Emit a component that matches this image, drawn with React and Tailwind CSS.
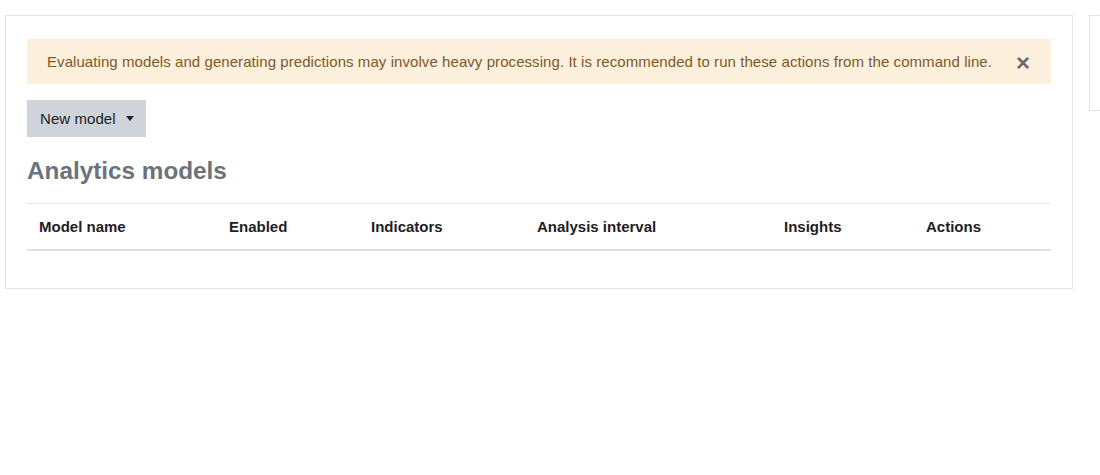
import React from 'react';

const columns = [
  { label: 'Model name', width: 'w-[190px]' },
  { label: 'Enabled', width: 'w-[142px]' },
  { label: 'Indicators', width: 'w-[166px]' },
  { label: 'Analysis interval', width: 'w-[247px]' },
  { label: 'Insights', width: 'w-[142px]' },
  { label: 'Actions', width: '' },
];

const App = () => {
  return (
    <div
      className="w-[1100px] h-[475px] overflow-hidden bg-white text-[15px] text-[#1d2125]"
      style={{ fontFamily: '"Liberation Sans", Arial, sans-serif' }}
    >
      <div className="flex items-start gap-[16px] pl-[5px] pt-[15px]">
        {/* Main card */}
        <div className="w-[1068px] shrink-0 border border-[#e3e3e3] bg-white px-[21px] pt-[23px] pb-[37px]">
          {/* Warning alert */}
          <div className="flex h-[45px] items-center justify-between bg-[#fcefdc] pl-[20px] pr-[21px] pt-[2px] text-[#7d5a29]">
            <span className="tracking-[0.07px]">
              Evaluating models and generating predictions may involve heavy processing. It is recommended to run these actions from the command line.
            </span>
            <span className="text-[24px] font-bold leading-none text-[#6b6b6b]">×</span>
          </div>

          {/* New model button */}
          <button className="mt-[16px] flex h-[37px] items-center gap-[10px] bg-[#ced4da] pl-[13px] pr-[12px] pt-[2px] text-[#1d2125]">
            <span className="tracking-[0.07px]">New model</span>
            <span className="mb-[2px] h-0 w-0 border-x-[4.5px] border-t-[5px] border-x-transparent border-t-[#1d2125]" />
          </button>

          {/* Heading */}
          <h3 className="mt-[20px] text-[24.3px] font-bold leading-[28px] text-[#6a737b]">
            Analytics models
          </h3>

          {/* Table header */}
          <div className="mt-[18px] flex h-[48px] items-center border-t border-b-2 border-t-[#e5e7ea] border-b-[#dee2e6] px-[12px] pt-[2px] font-bold">
            {columns.map((col) => (
              <div key={col.label} className={col.width}>
                {col.label}
              </div>
            ))}
          </div>
        </div>

        {/* Side card, partially visible */}
        <div className="h-[96px] w-[200px] shrink-0 border border-[#e3e3e3] bg-white" />
      </div>
    </div>
  );
};

export default App;
